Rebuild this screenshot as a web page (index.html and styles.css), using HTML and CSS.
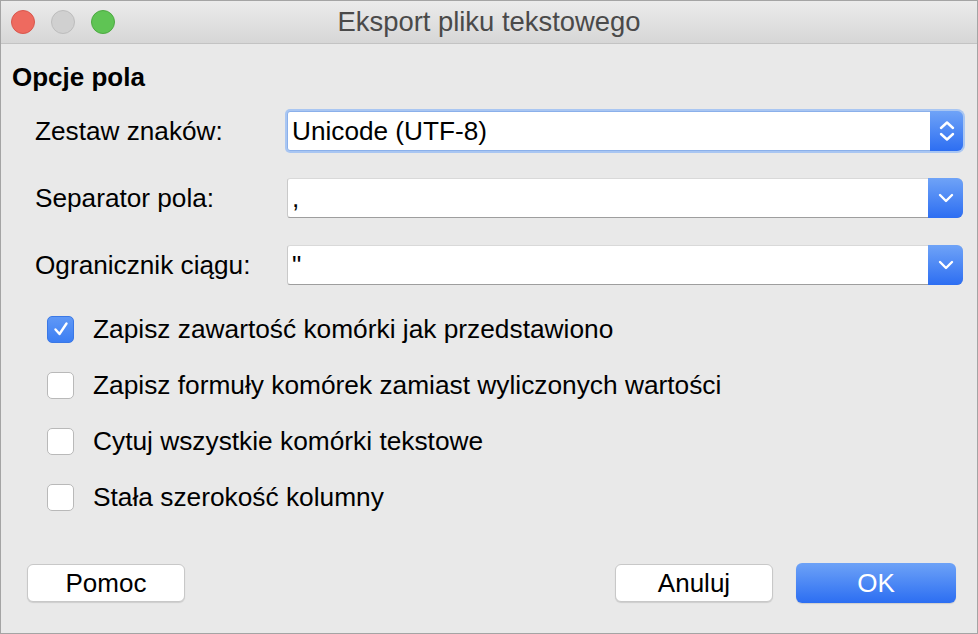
FILE: index.html
```html
<!DOCTYPE html>
<html lang="pl">
<head>
<meta charset="utf-8">
<title>Eksport pliku tekstowego</title>
<link rel="stylesheet" href="styles.css">
</head>
<body>
<div class="window">
  <div class="titlebar">
    <div class="lights">
      <span class="light red"></span>
      <span class="light gray"></span>
      <span class="light green"></span>
    </div>
    <div class="title">Eksport pliku tekstowego</div>
    <div></div>
  </div>
  <div class="content">
    <div class="heading">Opcje pola</div>
    <div class="form">
      <label class="label">Zestaw znaków:</label>
      <div class="select focused">
        <span class="value">Unicode (UTF-8)</span>
        <span class="arrow">
          <svg width="16" height="22" viewBox="0 0 16 22"><path d="M2 8 L8 2.5 L14 8 M2 14 L8 19.5 L14 14" fill="none" stroke="#fff" stroke-width="2.4" stroke-linecap="round" stroke-linejoin="round"/></svg>
        </span>
      </div>
      <label class="label">Separator pola:</label>
      <div class="select">
        <span class="value">,</span>
        <span class="arrow">
          <svg width="16" height="12" viewBox="0 0 16 12"><path d="M2 3 L8 9 L14 3" fill="none" stroke="#fff" stroke-width="2.4" stroke-linecap="round" stroke-linejoin="round"/></svg>
        </span>
      </div>
      <label class="label">Ogranicznik ciągu:</label>
      <div class="select">
        <span class="value">"</span>
        <span class="arrow">
          <svg width="16" height="12" viewBox="0 0 16 12"><path d="M2 3 L8 9 L14 3" fill="none" stroke="#fff" stroke-width="2.4" stroke-linecap="round" stroke-linejoin="round"/></svg>
        </span>
      </div>
    </div>
    <div class="checks">
      <div class="check-row">
        <span class="box checked">
          <svg width="18" height="18" viewBox="0 0 18 18"><path d="M3.5 9.5 L7.5 14 L14.5 3.5" fill="none" stroke="#fff" stroke-width="2.4" stroke-linecap="round" stroke-linejoin="round"/></svg>
        </span>
        <span class="check-text">Zapisz zawartość komórki jak przedstawiono</span>
      </div>
      <div class="check-row">
        <span class="box"></span>
        <span class="check-text">Zapisz formuły komórek zamiast wyliczonych wartości</span>
      </div>
      <div class="check-row">
        <span class="box"></span>
        <span class="check-text">Cytuj wszystkie komórki tekstowe</span>
      </div>
      <div class="check-row">
        <span class="box"></span>
        <span class="check-text">Stała szerokość kolumny</span>
      </div>
    </div>
    <div class="footer">
      <button class="btn">Pomoc</button>
      <div class="spacer"></div>
      <button class="btn">Anuluj</button>
      <button class="btn primary">OK</button>
    </div>
  </div>
</div>
</body>
</html>
```

FILE: styles.css
```css
* { box-sizing: border-box; }
html, body { margin: 0; padding: 0; }
body {
  font-family: "Liberation Sans", Arial, sans-serif;
  color: #000;
  background: #ececec;
}
.window {
  width: 978px;
  height: 634px;
  border: 1px solid #a4a4a4;
  background: #e9e9e9;
  display: flex;
  flex-direction: column;
}
.titlebar {
  height: 43px;
  flex: none;
  display: grid;
  grid-template-columns: 1fr auto 1fr;
  align-items: center;
  background: linear-gradient(#ebebeb, #d6d6d6);
  border-bottom: 1px solid #c3c3c3;
}
.lights {
  display: flex;
  gap: 16px;
  padding-left: 10px;
}
.light {
  width: 24px;
  height: 24px;
  border-radius: 50%;
  display: block;
}
.light.red { background: #ee6a5f; border: 1px solid #d9574d; }
.light.gray { background: #d0d0d0; border: 1px solid #bdbdbd; }
.light.green { background: #5fc454; border: 1px solid #4daa42; }
.title {
  font-size: 27.4px;
  color: #4a4a4a;
}
.content {
  flex: 1;
  display: flex;
  flex-direction: column;
  padding: 18px 14px 30px 11px;
}
.heading {
  font-weight: bold;
  font-size: 26px;
  line-height: 30px;
}
.form {
  margin-top: 19px;
  padding-left: 23px;
  display: grid;
  grid-template-columns: 252px 1fr;
  row-gap: 27px;
  align-items: center;
}
.label {
  font-size: 26.2px;
}
.select {
  height: 40px;
  display: flex;
  align-items: stretch;
  background: #fff;
  border: 1px solid #c9c9c9;
  border-top-color: #d9d9d9;
  border-bottom-color: #9e9e9e;
  border-radius: 3px 6px 6px 3px;
}
.select.focused {
  border-color: #8bb0ea;
  box-shadow: 0 0 0 2px #a9c6f2;
}
.value {
  flex: 1;
  font-size: 26.2px;
  line-height: 38px;
  padding-left: 4px;
}
.arrow {
  width: 35px;
  margin: -1px -1px -1px 0;
  border-radius: 0 6px 6px 0;
  background: linear-gradient(#6fa3f7, #2d6ef2);
  display: flex;
  align-items: center;
  justify-content: center;
}
.focused .arrow { width: 33px; }
.checks {
  margin-top: 16px;
  padding-left: 35px;
  display: flex;
  flex-direction: column;
}
.check-row {
  height: 56px;
  display: flex;
  align-items: center;
  gap: 19px;
}
.box {
  width: 27px;
  height: 27px;
  flex: none;
  background: #fff;
  border: 1px solid #b9b9b9;
  border-radius: 5px;
  display: flex;
  align-items: center;
  justify-content: center;
}
.box.checked {
  background: linear-gradient(#5f98f6, #3c7ef3);
  border-color: #3a78e6;
}
.check-text {
  font-size: 26.3px;
}
.footer {
  margin-top: auto;
  display: flex;
  align-items: center;
  padding-left: 15px;
  margin-right: 7px;
}
.spacer { flex: 1; }
.btn {
  font-family: "Liberation Sans", Arial, sans-serif;
  font-size: 26px;
  width: 158px;
  height: 38px;
  background: #fff;
  border: 1px solid #c8c8c8;
  border-radius: 6px;
  box-shadow: 0 1px 1px rgba(0,0,0,0.12);
  color: #000;
  padding: 0;
}
.btn + .btn { margin-left: 23px; }
.btn.primary {
  width: 160px;
  height: 40px;
  color: #fff;
  border: none;
  background: linear-gradient(#6da2f7, #2c6ef2);
}
```
